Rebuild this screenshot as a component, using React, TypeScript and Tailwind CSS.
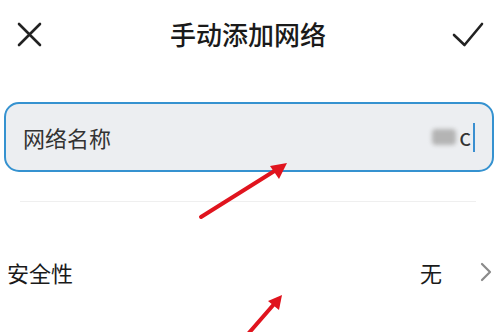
import React from "react";

export default function App() {
  const font = { fontFamily: '"Noto Sans CJK SC", "Noto Sans", sans-serif' };
  return (
    <div className="relative w-[500px] h-[332px] bg-white overflow-hidden" style={font}>
      {/* Header */}
      <div className="h-[68px] flex items-center justify-between pl-[17px] pr-[16px]">
        <svg width="25" height="25" viewBox="0 0 25 25" className="mt-[1px]">
          <path d="M2 2 L23 23 M23 2 L2 23" stroke="#222" strokeWidth="2.6" strokeLinecap="round" fill="none" />
        </svg>
        <div className="text-[26px] leading-none font-medium text-[#1a1a1a] ml-[2px]">手动添加网络</div>
        <svg width="32" height="25" viewBox="0 0 32 25" className="mt-[1px]">
          <path d="M2 13 L12.5 23 L30 2" stroke="#222" strokeWidth="2.6" strokeLinecap="round" strokeLinejoin="round" fill="none" />
        </svg>
      </div>

      {/* Input */}
      <div className="mt-[34px] ml-[4px] w-[490px] h-[70px] rounded-[15px] border-2 border-[#3592d0] bg-[#eceef1] flex items-center pl-[17px] pr-[17px]">
        <div className="text-[22px] leading-none text-[#333] flex-1">网络名称</div>
        <div className="flex items-center">
          <div className="w-[24px] h-[16px] rounded-[4px] bg-[#b4b4b4] blur-[2px] mr-[3px]" />
          <div className="text-[23px] leading-none text-[#333] -mt-[2px]">c</div>
          <div className="w-[2px] h-[29px] bg-[#3a8fd0] ml-[2px]" />
        </div>
      </div>

      {/* Divider */}
      <div className="mt-[29px] ml-[20px] w-[456px] h-px bg-[#efefef]" />

      {/* Security row */}
      <div className="mt-[35px] h-[70px] flex items-start pt-[24px] pl-[7px] pr-[8px]">
        <div className="text-[22px] leading-none text-[#1a1a1a] flex-1">安全性</div>
        <div className="text-[22px] leading-none text-[#1a1a1a] mr-[38px]">无</div>
        <svg width="12" height="20" viewBox="0 0 12 20" className="mt-[1px]">
          <path d="M2 2 L10 10 L2 18" stroke="#8a8a8a" strokeWidth="2.2" strokeLinecap="round" strokeLinejoin="round" fill="none" />
        </svg>
      </div>

      {/* Red annotation arrows */}
      <svg className="absolute left-0 top-0 pointer-events-none" width="500" height="332" viewBox="0 0 500 332">
        <line x1="201" y1="217" x2="276" y2="170" stroke="#e0141e" strokeWidth="4" strokeLinecap="round" />
        <polygon points="287,163 270,166 279,179" fill="#e0141e" />
        <line x1="248" y1="334" x2="275" y2="303" stroke="#e0141e" strokeWidth="4" strokeLinecap="round" />
        <polygon points="282,295 268,301 279,310" fill="#e0141e" />
      </svg>
    </div>
  );
}
